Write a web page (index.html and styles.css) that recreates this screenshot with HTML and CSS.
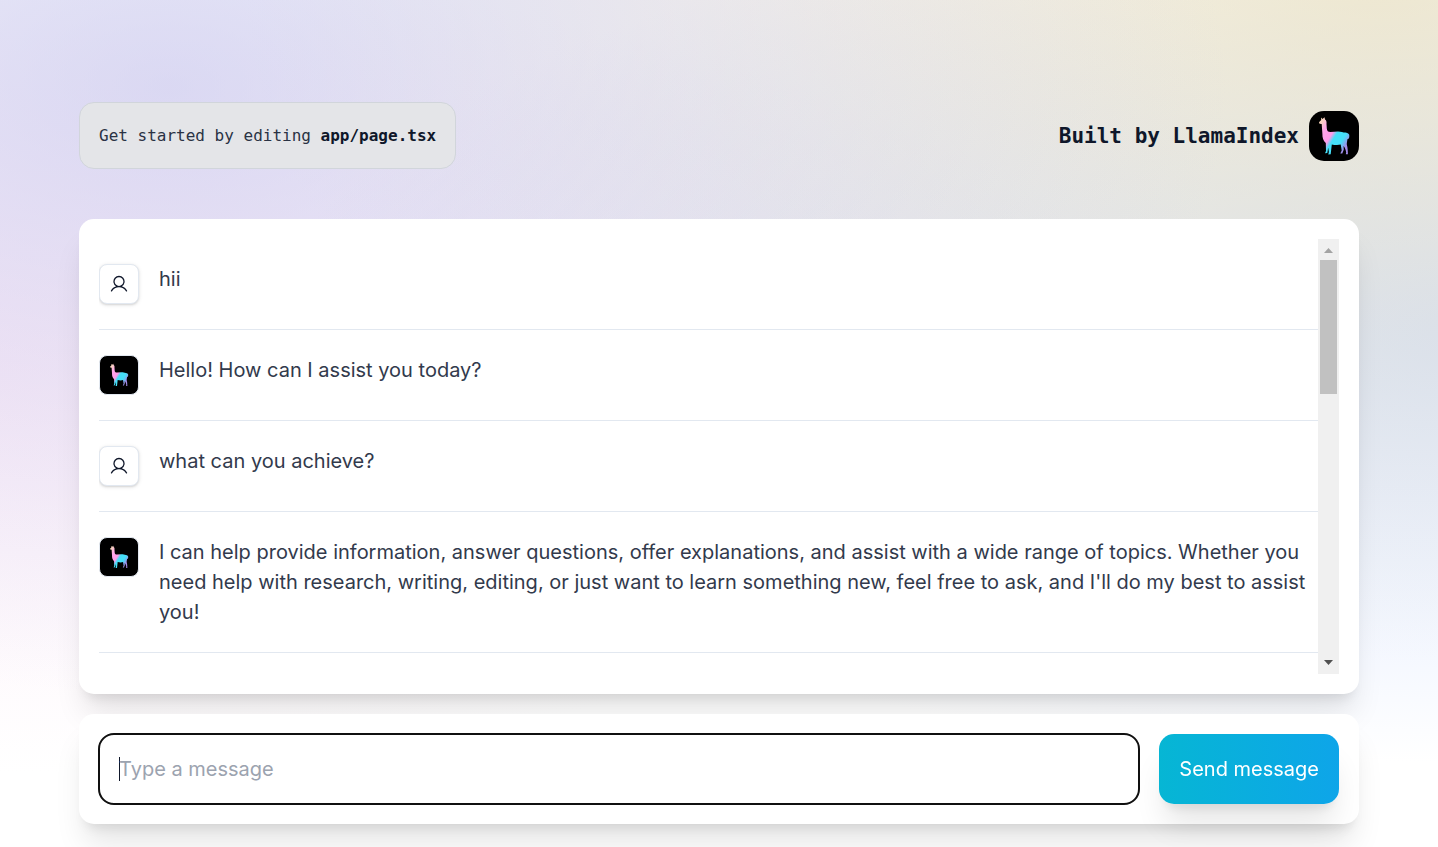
FILE: index.html
```html
<!DOCTYPE html>
<html lang="en">
<head>
<meta charset="utf-8">
<meta name="viewport" content="width=device-width, initial-scale=1">
<title>LlamaIndex Chat</title>
<link rel="stylesheet" href="styles.css">
</head>
<body>
<svg class="defs" aria-hidden="true">
  <defs>
    <linearGradient id="coat" gradientUnits="userSpaceOnUse" x1="8" y1="12" x2="42" y2="33">
      <stop offset="0" stop-color="#f6dcb7"/>
      <stop offset="0.1" stop-color="#f9cfc4"/>
      <stop offset="0.24" stop-color="#ffa6ea"/>
      <stop offset="0.46" stop-color="#ff9be9"/>
      <stop offset="0.56" stop-color="#45dff8"/>
      <stop offset="0.76" stop-color="#45dff8"/>
      <stop offset="0.92" stop-color="#a48bea"/>
    </linearGradient>
    <symbol id="llama" viewBox="0 0 50 50">
      <path fill="url(#coat)" d="M12 6.500L13.500 8L15.500 6.300L16 8.500C17.600 9.500 17.700 11 17.500 13L17.800 17.500C18 20 19 21 21.500 21L29 20.400C32 20.400 34 21.500 36.500 21.500C39 21.700 40.800 23.200 40.300 25.300C40.400 27 39.300 28.300 38.400 28.300C38.300 30.500 37.400 32.500 38 34.500C38.600 36.500 38.800 39 38.900 43.200L36.800 43.200L37.200 41.500C36.900 39 36 36.500 34.500 35L34.800 38.500L33.300 42.600L31.300 42.600L32.700 39.500L31.700 33.500C29 34.300 25.500 34 22.800 33.400L21.700 43.200L19.300 43.400L19.900 41L19.200 36.800L18.300 42L16 42.300L17 40L16.800 32C14.300 30 13.200 26.500 13.400 23L12.700 13L10.500 12.700L10 11.200L12.200 9Z"/>
    </symbol>
    <symbol id="user" viewBox="0 0 256 256">
      <path fill="currentColor" d="M230.920 212c-15.230-26.330-38.700-45.210-66.090-54.160a72 72 0 1 0-73.660 0c-27.390 8.940-50.860 27.820-66.090 54.160a8 8 0 1 0 13.850 8c18.840-32.560 52.140-52 89.070-52s70.230 19.440 89.070 52a8 8 0 1 0 13.850-8ZM72 96a56 56 0 1 1 56 56 56.060 56.060 0 0 1-56-56Z"/>
    </symbol>
  </defs>
</svg>
<main class="page">
  <header class="topbar">
    <p class="hint">Get started by editing <code>app/page.tsx</code></p>
    <a class="brand" href="#">
      <span>Built by LlamaIndex</span>
      <svg class="logo" role="img" aria-label="Llama logo"><use href="#llama"/></svg>
    </a>
  </header>
  <div class="chat">
    <section class="card conversation" aria-label="Conversation">
      <ol class="messages">
        <li class="message">
          <span class="avatar"><svg class="person" aria-hidden="true"><use href="#user"/></svg></span>
          <p>hii</p>
        </li>
        <li class="message">
          <span class="avatar bot"><svg class="llama" aria-hidden="true"><use href="#llama"/></svg></span>
          <p>Hello! How can I assist you today?</p>
        </li>
        <li class="message">
          <span class="avatar"><svg class="person" aria-hidden="true"><use href="#user"/></svg></span>
          <p>what can you achieve?</p>
        </li>
        <li class="message">
          <span class="avatar bot"><svg class="llama" aria-hidden="true"><use href="#llama"/></svg></span>
          <p>I can help provide information, answer questions, offer explanations, and assist with a wide range of topics. Whether you need help with research, writing, editing, or just want to learn something new, feel free to ask, and I'll do my best to assist you!</p>
        </li>
      </ol>
      <div class="scrollbar" aria-hidden="true">
        <svg class="arrow muted" viewBox="0 0 21 21"><path d="M6 14L10.500 9L15 14Z"/></svg>
        <div class="track"><div class="thumb"></div></div>
        <svg class="arrow" viewBox="0 0 21 21"><path d="M6 7L10.500 12L15 7Z"/></svg>
      </div>
    </section>
    <form class="card composer">
      <input type="text" aria-label="Message" placeholder="Type a message" autofocus>
      <button type="submit">Send message</button>
    </form>
  </div>
</main>
</body>
</html>
```
FILE: styles.css
```css
*, *::before, *::after { box-sizing: border-box; }

body {
  margin: 0;
  color: #0f172a;
  font: 400 20px/30px Inter, sans-serif;
}

p, ol { margin: 0; padding: 0; }

.defs { position: absolute; width: 0; height: 0; }

.page {
  display: flex;
  flex-direction: column;
  align-items: center;
  gap: 50px;
  min-height: 100vh;
  padding: 102px 40px 23px;
  background-color: #fff;
  background-image:
    radial-gradient(at 21% 11%, rgba(186, 186, 233, 0.53) 0, transparent 50%),
    radial-gradient(at 85% 0, hsla(46, 57%, 78%, 0.52) 0, transparent 50%),
    radial-gradient(at 91% 36%, rgba(194, 213, 255, 0.68) 0, transparent 50%),
    radial-gradient(at 8% 40%, rgba(251, 218, 239, 0.46) 0, transparent 50%);
  background-position: center -18px;
  background-size: 132% 962px;
  background-repeat: no-repeat;
}

.topbar {
  display: flex;
  align-items: center;
  justify-content: space-between;
  width: 100%;
  max-width: 1280px;
  font-family: Consolas, "DejaVu Sans Mono", monospace;
}

.hint {
  padding: 20px 19px;
  border: 1px solid #d1d5db;
  border-radius: 15px;
  background: #e4e5e8;
  color: #2a3244;
  font-size: 16px;
  line-height: 25px;
}

.hint code { color: #0f172a; font-family: inherit; font-weight: 700; }

.brand {
  display: flex;
  align-items: center;
  gap: 10px;
  color: inherit;
  font-size: 21px;
  font-weight: 700;
  text-decoration: none;
}

.logo {
  width: 50px;
  height: 50px;
  border-radius: 15px;
  background: #000;
}

.chat {
  display: flex;
  flex-direction: column;
  gap: 20px;
  width: 100%;
  max-width: 1280px;
}

.card {
  padding: 20px;
  border-radius: 15px;
  background: #fff;
  box-shadow: 0 25px 31px -6px rgba(0, 0, 0, 0.1), 0 10px 12px -7px rgba(0, 0, 0, 0.1);
}

.conversation { display: flex; }

.messages {
  flex: 1;
  min-width: 0;
  height: 435px;
  overflow-y: auto;
  list-style: none;
  scrollbar-width: none;
}

.scrollbar {
  display: flex;
  flex: none;
  flex-direction: column;
  width: 21px;
  background: #f0f0f0;
}

.arrow { width: 21px; height: 21px; fill: #505050; }
.arrow.muted { fill: #a3a3a3; }
.track { flex: 1; padding: 0 2px; }
.thumb { height: 34%; background: #c1c1c1; }

.message {
  display: flex;
  align-items: flex-start;
  gap: 20px;
  padding: 25px 0;
  border-bottom: 1px solid #e2e8f0;
}

.message p { flex: 1; color: #323a4c; }

.avatar {
  display: grid;
  flex: none;
  place-items: center;
  width: 40px;
  height: 40px;
  border: 1px solid #e2e8f0;
  border-radius: 8px;
  background: #fff;
  box-shadow: 0 1px 4px rgba(0, 0, 0, 0.1), 0 1px 2px rgba(0, 0, 0, 0.1);
}

.avatar.bot { background: #000; box-shadow: none; }
.person { width: 20px; height: 20px; }
.llama { width: 30px; height: 30px; }

.composer { display: flex; gap: 20px; }

.composer input {
  flex: 1;
  min-width: 0;
  height: 70px;
  padding: 20px;
  border: 0;
  border-radius: 15px;
  outline: 2px solid #101010;
  outline-offset: -1px;
  background: #fff;
  color: inherit;
  font: inherit;
}

.composer input::placeholder { color: #9ca3af; opacity: 1; }

/* Steady caret while the field is empty */
.composer input:placeholder-shown {
  background: linear-gradient(#0f172a, #0f172a) 20px center / 1px 24px no-repeat #fff;
  caret-color: transparent;
}

.composer button {
  height: 70px;
  padding: 0 20px;
  border: 0;
  border-radius: 15px;
  background: linear-gradient(to right, #06b6d4, #0ea5e9);
  box-shadow: 0 25px 31px -6px rgba(0, 0, 0, 0.1), 0 10px 12px -7px rgba(0, 0, 0, 0.1);
  color: #fff;
  font: inherit;
}
```
